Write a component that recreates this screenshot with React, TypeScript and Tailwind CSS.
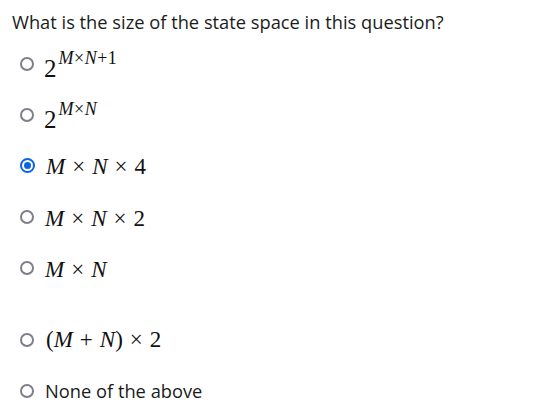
import React from "react";

const serif = { fontFamily: '"Liberation Serif", "Times New Roman", serif' };

function Radio({ checked }: { checked?: boolean }) {
  if (checked) {
    return (
      <span className="flex h-[15px] w-[15px] shrink-0 items-center justify-center rounded-full border-[2.5px] border-[#0b63e6] bg-white">
        <span className="h-[7px] w-[7px] rounded-full bg-[#0b63e6]" />
      </span>
    );
  }
  return <span className="block h-[14px] w-[14px] shrink-0 rounded-full border-2 border-[#7e7e8c] bg-white" />;
}

function I({ children }: { children: React.ReactNode }) {
  return <span className="italic">{children}</span>;
}

function Op({ children }: { children: React.ReactNode }) {
  return <span className="mx-[7px]">{children}</span>;
}

function Row({ checked, children, className = "" }: { checked?: boolean; children: React.ReactNode; className?: string }) {
  return (
    <div className={"flex h-[51px] items-center " + className}>
      <div className="flex w-[33px] justify-start pl-[8px]">
        <Radio checked={checked} />
      </div>
      {children}
    </div>
  );
}

function Math({ children, className = "" }: { children: React.ReactNode; className?: string }) {
  return (
    <span className={"whitespace-nowrap text-[23px] leading-none text-[#111] " + className} style={serif}>
      {children}
    </span>
  );
}

function Power({ children }: { children: React.ReactNode }) {
  return (
    <span className="flex items-start whitespace-nowrap text-[#111]" style={serif}>
      <span className="mt-[7px] text-[25px] leading-[25px]">2</span>
      <span className="ml-[2px] text-[18px] leading-[18px] tracking-[0.5px]">{children}</span>
    </span>
  );
}

export default function App() {
  return (
    <div
      className="min-h-[410px] w-[557px] bg-white px-3 pt-[10px] text-[#1b1b1b]"
      style={{ fontFamily: '"Open Sans", "Noto Sans", sans-serif' }}
    >
      <div className="text-[18.3px] leading-[24px]">What is the size of the state space in this question?</div>
      <div className="mt-[4px]">
        <Row>
          <div className="ml-[-1px] mt-[2px]">
            <Power>
              <I>M</I>×<I>N</I>+1
            </Power>
          </div>
        </Row>
        <Row>
          <div className="ml-[-1px] mt-[2px]">
            <Power>
              <I>M</I>×<I>N</I>
            </Power>
          </div>
        </Row>
        <Row checked>
          <Math className="ml-[1px] mt-[2px]">
            <I>M</I>
            <Op>×</Op>
            <I>N</I>
            <Op>×</Op>4
          </Math>
        </Row>
        <Row>
          <Math className="mt-[4px]">
            <I>M</I>
            <Op>×</Op>
            <I>N</I>
            <Op>×</Op>2
          </Math>
        </Row>
        <Row>
          <Math className="mt-[4px]">
            <I>M</I>
            <Op>×</Op>
            <I>N</I>
          </Math>
        </Row>
        <Row className="mt-[21px]">
          <Math className="ml-[1px]">
            (<I>M</I>
            <Op>+</Op>
            <I>N</I>)<Op>×</Op>2
          </Math>
        </Row>
        <Row>
          <span className="text-[18.3px] leading-[24px]">None of the above</span>
        </Row>
      </div>
    </div>
  );
}
